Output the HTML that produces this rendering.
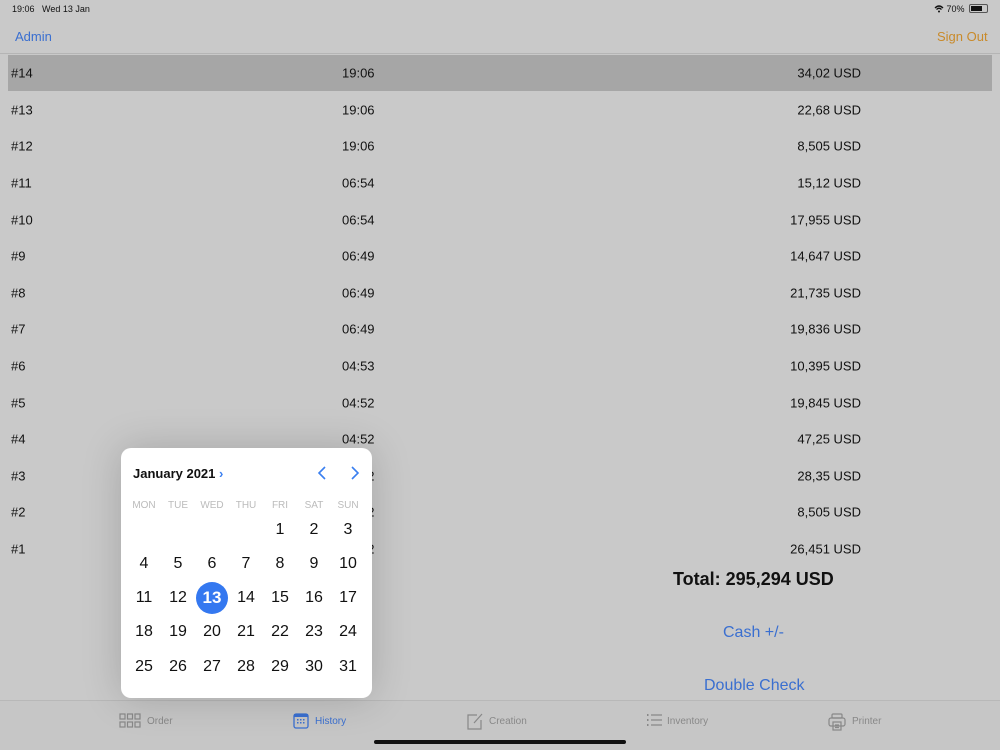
<!DOCTYPE html>
<html><head><meta charset="utf-8"><style>
*{margin:0;padding:0;box-sizing:border-box}
body{width:1000px;height:750px;background:#c9c9c9;font-family:"Liberation Sans",sans-serif;position:relative;overflow:hidden;color:#111}
.a{position:absolute;white-space:nowrap}
.hdr{position:absolute;left:0;top:0;width:1000px;height:54px;background:#c9c9c9;border-bottom:1px solid #b5b5b5}
.sel{position:absolute;left:8px;top:55px;width:984px;height:36px;background:#a6a6a6}
.r{position:absolute;font-size:13px;transform:translateY(-50%);margin-top:1px}
.cal{position:absolute;left:121px;top:448px;width:251px;height:250px;background:#fff;border-radius:10px;box-shadow:0 0 40px rgba(0,0,0,.18)}
.d{position:absolute;width:34px;text-align:center;font-size:16px;transform:translate(-50%,-50%);color:#111;margin-top:1px}
.w{position:absolute;width:34px;text-align:center;font-size:10px;color:#bbb;transform:translateX(-50%);margin-top:1px}
.tab{position:absolute;top:700px;left:0;width:1000px;height:50px;background:#c6c6c6;border-top:1px solid #b8b8b8}
.tl{position:absolute;top:716px;font-size:10px;color:#888}
</style></head><body>
<div class="hdr"></div>
<div class="a" style="left:12px;top:4px;font-size:9px">19:06&nbsp;&nbsp; Wed 13 Jan</div>
<div class="a" style="left:934px;top:4px;font-size:9px">
<svg width="10" height="8" viewBox="0 0 10 8" style="vertical-align:-1px"><path d="M1 3Q5 -1 9 3M2.5 4.5Q5 2 7.5 4.5" stroke="#111" fill="none" stroke-width="1.3"/><circle cx="5" cy="6.5" r="1" fill="#111"/></svg> 70%</div>
<div class="a" style="left:969px;top:4px;width:19px;height:9px;border:1px solid #555;border-radius:2px"><div style="margin:1px;width:11px;height:5px;background:#111"></div></div>
<div class="a" style="left:15px;top:29px;font-size:13px;color:#3a6fd0">Admin</div>
<div class="a" style="left:937px;top:29px;font-size:13px;color:#c98a2a">Sign Out</div>
<div class="sel"></div>
<div class="r" style="left:11px;top:72px">#14</div><div class="r" style="left:342px;top:72px">19:06</div><div class="r" style="right:139px;top:72px">34,02 USD</div>
<div class="r" style="left:11px;top:109px">#13</div><div class="r" style="left:342px;top:109px">19:06</div><div class="r" style="right:139px;top:109px">22,68 USD</div>
<div class="r" style="left:11px;top:145px">#12</div><div class="r" style="left:342px;top:145px">19:06</div><div class="r" style="right:139px;top:145px">8,505 USD</div>
<div class="r" style="left:11px;top:182px">#11</div><div class="r" style="left:342px;top:182px">06:54</div><div class="r" style="right:139px;top:182px">15,12 USD</div>
<div class="r" style="left:11px;top:219px">#10</div><div class="r" style="left:342px;top:219px">06:54</div><div class="r" style="right:139px;top:219px">17,955 USD</div>
<div class="r" style="left:11px;top:255px">#9</div><div class="r" style="left:342px;top:255px">06:49</div><div class="r" style="right:139px;top:255px">14,647 USD</div>
<div class="r" style="left:11px;top:292px">#8</div><div class="r" style="left:342px;top:292px">06:49</div><div class="r" style="right:139px;top:292px">21,735 USD</div>
<div class="r" style="left:11px;top:328px">#7</div><div class="r" style="left:342px;top:328px">06:49</div><div class="r" style="right:139px;top:328px">19,836 USD</div>
<div class="r" style="left:11px;top:365px">#6</div><div class="r" style="left:342px;top:365px">04:53</div><div class="r" style="right:139px;top:365px">10,395 USD</div>
<div class="r" style="left:11px;top:402px">#5</div><div class="r" style="left:342px;top:402px">04:52</div><div class="r" style="right:139px;top:402px">19,845 USD</div>
<div class="r" style="left:11px;top:438px">#4</div><div class="r" style="left:342px;top:438px">04:52</div><div class="r" style="right:139px;top:438px">47,25 USD</div>
<div class="r" style="left:11px;top:475px">#3</div><div class="r" style="left:342px;top:475px">04:52</div><div class="r" style="right:139px;top:475px">28,35 USD</div>
<div class="r" style="left:11px;top:511px">#2</div><div class="r" style="left:342px;top:511px">04:52</div><div class="r" style="right:139px;top:511px">8,505 USD</div>
<div class="r" style="left:11px;top:548px">#1</div><div class="r" style="left:342px;top:548px">04:52</div><div class="r" style="right:139px;top:548px">26,451 USD</div>
<div class="a" style="left:673px;top:569px;font-size:18px;font-weight:bold;color:#111">Total: 295,294 USD</div>
<div class="a" style="left:723px;top:624px;font-size:16px;color:#3a6fd0">Cash +/-</div>
<div class="a" style="left:704px;top:677px;font-size:16px;color:#3a6fd0">Double Check</div>
<div class="tab"></div>
<svg class="a" style="left:119px;top:713px" width="22" height="16" viewBox="0 0 22 16"><g fill="none" stroke="#888" stroke-width="1.2"><rect x="1" y="1" width="5" height="5"/><rect x="8.5" y="1" width="5" height="5"/><rect x="16" y="1" width="5" height="5"/><rect x="1" y="9" width="5" height="5"/><rect x="8.5" y="9" width="5" height="5"/><rect x="16" y="9" width="5" height="5"/></g></svg>
<div class="tl" style="left:147px">Order</div>
<svg class="a" style="left:293px;top:713px" width="16" height="16" viewBox="0 0 16 16"><rect x="1" y="1" width="14" height="14" rx="2" fill="none" stroke="#3a6fd0" stroke-width="1.3"/><rect x="1" y="1" width="14" height="3" fill="#3a6fd0"/><g fill="#3a6fd0"><rect x="4" y="6" width="1.5" height="1.5"/><rect x="7" y="6" width="1.5" height="1.5"/><rect x="10" y="6" width="1.5" height="1.5"/><rect x="4" y="9" width="1.5" height="1.5"/><rect x="7" y="9" width="1.5" height="1.5"/><rect x="10" y="9" width="1.5" height="1.5"/></g></svg>
<div class="tl" style="left:315px;color:#3a6fd0">History</div>
<svg class="a" style="left:467px;top:713px" width="17" height="17" viewBox="0 0 17 17"><path d="M10 2H1v14h13V7M7 10L15 1" fill="none" stroke="#888" stroke-width="1.2"/></svg>
<div class="tl" style="left:489px">Creation</div>
<svg class="a" style="left:646px;top:713px" width="16" height="15" viewBox="0 0 16 15"><g stroke="#888" stroke-width="1.2"><path d="M5 2h11M5 7h11M5 12h11"/></g><g fill="#888"><rect x="1" y="1" width="1.5" height="2"/><rect x="1" y="6" width="1.5" height="2"/><rect x="1" y="11" width="1.5" height="2"/></g></svg>
<div class="tl" style="left:667px">Inventory</div>
<svg class="a" style="left:828px;top:713px" width="18" height="18" viewBox="0 0 18 18"><g fill="none" stroke="#888" stroke-width="1.2"><rect x="4" y="1" width="10" height="4" rx="1"/><rect x="1" y="5" width="16" height="8" rx="2"/><rect x="5" y="9" width="8" height="8"/><path d="M7 12h4M7 14.5h4"/></g></svg>
<div class="tl" style="left:852px">Printer</div>
<div class="a" style="left:374px;top:740px;width:252px;height:4px;border-radius:2px;background:#111"></div>

<div class="cal">
<div class="a" style="left:12px;top:18px;font-size:13px;font-weight:bold;color:#111">January 2021 <span style="color:#3a7ff0">›</span></div>
<svg class="a" style="left:196px;top:18px" width="10" height="14" viewBox="0 0 10 14"><path d="M8 1L2 7l6 6" fill="none" stroke="#3a7ff0" stroke-width="1.6"/></svg>
<svg class="a" style="left:229px;top:18px" width="10" height="14" viewBox="0 0 10 14"><path d="M2 1l6 6-6 6" fill="none" stroke="#3a7ff0" stroke-width="1.6"/></svg>
<div class="w" style="left:23px;top:51px">MON</div><div class="w" style="left:57px;top:51px">TUE</div><div class="w" style="left:91px;top:51px">WED</div><div class="w" style="left:125px;top:51px">THU</div><div class="w" style="left:159px;top:51px">FRI</div><div class="w" style="left:193px;top:51px">SAT</div><div class="w" style="left:227px;top:51px">SUN</div>
<div class="d" style="left:159px;top:81px">1</div><div class="d" style="left:193px;top:81px">2</div><div class="d" style="left:227px;top:81px">3</div>
<div class="d" style="left:23px;top:115px">4</div><div class="d" style="left:57px;top:115px">5</div><div class="d" style="left:91px;top:115px">6</div><div class="d" style="left:125px;top:115px">7</div><div class="d" style="left:159px;top:115px">8</div><div class="d" style="left:193px;top:115px">9</div><div class="d" style="left:227px;top:115px">10</div>
<div class="d" style="left:23px;top:149px">11</div><div class="d" style="left:57px;top:149px">12</div>
<div class="a" style="left:75px;top:134px;width:32px;height:32px;border-radius:50%;background:#3478f0"></div>
<div class="d" style="left:91px;top:149px;color:#fff;font-weight:bold;font-size:17px">13</div>
<div class="d" style="left:125px;top:149px">14</div><div class="d" style="left:159px;top:149px">15</div><div class="d" style="left:193px;top:149px">16</div><div class="d" style="left:227px;top:149px">17</div>
<div class="d" style="left:23px;top:183px">18</div><div class="d" style="left:57px;top:183px">19</div><div class="d" style="left:91px;top:183px">20</div><div class="d" style="left:125px;top:183px">21</div><div class="d" style="left:159px;top:183px">22</div><div class="d" style="left:193px;top:183px">23</div><div class="d" style="left:227px;top:183px">24</div>
<div class="d" style="left:23px;top:218px">25</div><div class="d" style="left:57px;top:218px">26</div><div class="d" style="left:91px;top:218px">27</div><div class="d" style="left:125px;top:218px">28</div><div class="d" style="left:159px;top:218px">29</div><div class="d" style="left:193px;top:218px">30</div><div class="d" style="left:227px;top:218px">31</div>
</div>
</body></html>
